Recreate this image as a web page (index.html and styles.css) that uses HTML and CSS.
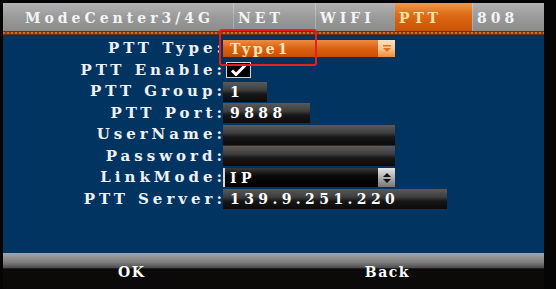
FILE: index.html
```html
<!DOCTYPE html>
<html lang="en">

<head>
  <meta charset="UTF-8">
  <meta name="viewport" content="width=device-width, initial-scale=1.0">
  <title>PTT</title>
  <link rel="stylesheet" href="styles.css">
</head>

<body>
  <div class="screen">
    <div class="tabs">
      <div class="tab tab-main">ModeCenter3/4G</div>
      <div class="tab">NET</div>
      <div class="tab">WIFI</div>
      <div class="tab active">PTT</div>
      <div class="tab">808</div>
    </div>
    <div class="rule"></div>

    <div class="panel">
      <div class="form">
        <div class="label">PTT Type:</div>
        <div class="field select select-orange w-long">
          <span>Type1</span>
          <span class="arrow arrow-orange"><svg width="10" height="9" viewBox="0 0 10 9"><rect x="1" y="1" width="8" height="1.5" fill="#e07020"/><path d="M1 4h8l-4 4z" fill="#e07020"/></svg></span>
        </div>

        <div class="label">PTT Enable:</div>
        <div class="check">
          <svg width="17" height="12" viewBox="0 0 17 12"><path d="M2 6.5l4 4L15 1.5" fill="none" stroke="#fff" stroke-width="3"/></svg>
        </div>

        <div class="label">PTT Group:</div>
        <div class="field w-group">1</div>

        <div class="label">PTT Port:</div>
        <div class="field w-port">9888</div>

        <div class="label">UserName:</div>
        <div class="field w-long"></div>

        <div class="label">Password:</div>
        <div class="field w-long"></div>

        <div class="label">LinkMode:</div>
        <div class="field select select-dark w-long">
          <span>IP</span>
          <span class="arrow arrow-grey"><svg width="10" height="12" viewBox="0 0 10 12"><path d="M1 5h8L5 1z M1 7h8l-4 4z" fill="#111"/></svg></span>
        </div>

        <div class="label">PTT Server:</div>
        <div class="field w-server">139.9.251.220</div>
      </div>
    </div>

    <div class="footer">
      <span>OK</span>
      <span>Back</span>
    </div>

    <!-- annotation drawn over the screenshot -->
    <div class="mark"></div>
  </div>
</body>

</html>
```

FILE: styles.css
```css
html,
body {
  margin: 0;
  height: 100%;
  background: #060505;
  overflow: hidden;
}

div.screen {
  position: relative;
  margin-left: 3px;
  padding-top: 3px;
  width: 541px;
  height: 286px;
  display: flex;
  flex-direction: column;
  font-family: "DejaVu Serif", serif;
  font-weight: bold;
  font-size: 14px;
  letter-spacing: 4px;
  color: #eef2f6;
}

div.tabs {
  display: flex;
  height: 28px;
  background: linear-gradient(#b3b3b3, #9a9a9a 50%, #8c8c8c);
}

div.tab {
  box-sizing: border-box;
  height: 28px;
  line-height: 30px;
  padding-left: 4px;
  border-left: 1px solid rgba(255, 255, 255, 0.25);
  color: #f4f4f4;
  white-space: nowrap;
}

div.tab-main {
  width: 230px;
  padding-left: 22px;
  border-left: none;
}

div.tab:nth-child(2) { width: 82px; }
div.tab:nth-child(3) { width: 80px; }
div.tab:nth-child(4) { width: 77px; }
div.tab:nth-child(5) { width: 72px; }

div.tab.active {
  color: #fde4a6;
  background: linear-gradient(#f39a48, #de6c18 40%, #c95304);
  border-left: none;
}

div.rule {
  height: 4px;
  background:
    repeating-linear-gradient(90deg, #d06a24 0 2px, #8d4216 2px 4px) 0 1px / 100% 2px no-repeat,
    #6a3212;
}

div.panel {
  height: 218px;
  background: #023462;
}

div.form {
  display: grid;
  grid-template-columns: 223px 1fr;
  grid-auto-rows: 21.5px;
  padding-top: 3px;
  align-items: center;
}

div.label {
  text-align: right;
  white-space: nowrap;
  font-size: 15px;
  line-height: 21px;
}

div.field {
  box-sizing: border-box;
  height: 20px;
  margin-left: -3px;
  padding-left: 7px;
  line-height: 21px;
  letter-spacing: 4.4px;
  color: #fff;
  white-space: nowrap;
  background: linear-gradient(#5a5a5a, #3e3e3e 40%, #171717 60%, #0b0b0b);
}

.w-long { width: 172px; }
.w-group { width: 44px; }
.w-port { width: 87px; }
.w-server { width: 224px; }

div.select {
  display: flex;
  justify-content: space-between;
  padding-right: 0;
}

div.select-orange {
  height: 17px;
  line-height: 18px;
  letter-spacing: 3px;
  color: #fbe6b4;
  background: linear-gradient(#eb8c44, #dc6414 45%, #c84e02);
}

div.select-dark {
  height: 19px;
  line-height: 20px;
  border-left: 2px solid #d8d8d8;
  padding-left: 5px;
  background: linear-gradient(#3a3a3a, #0a0a0a 40%, #000);
}

span.arrow {
  width: 17px;
  display: flex;
  align-items: center;
  justify-content: center;
}

span.arrow-orange {
  background: linear-gradient(#fbe0c0, #f7c890 50%, #ef8a36);
}

span.arrow-grey {
  background: linear-gradient(#e6e6e6, #b0b0b0 50%, #777);
}

div.check {
  box-sizing: border-box;
  width: 25px;
  height: 16px;
  margin-left: 0;
  border: 1px solid #cfd4da;
  background: #000;
  display: flex;
  align-items: center;
  justify-content: center;
}

div.footer {
  box-sizing: border-box;
  height: 36px;
  display: flex;
  justify-content: space-between;
  padding: 8px 134px 0 115px;
  line-height: 20px;
  letter-spacing: 1.5px;
  color: #fff;
  border-top: 1px solid #8aa6c0;
  background: linear-gradient(#a2a2a2, #7a7a7a 25%, #4a4a4a 40%, #0d0a0a 42%, #0a0808);
}

div.mark {
  position: absolute;
  left: 216px;
  top: 29px;
  width: 98px;
  height: 37px;
  box-sizing: border-box;
  border: 2.5px solid #e3201c;
  border-radius: 3px;
}
```
